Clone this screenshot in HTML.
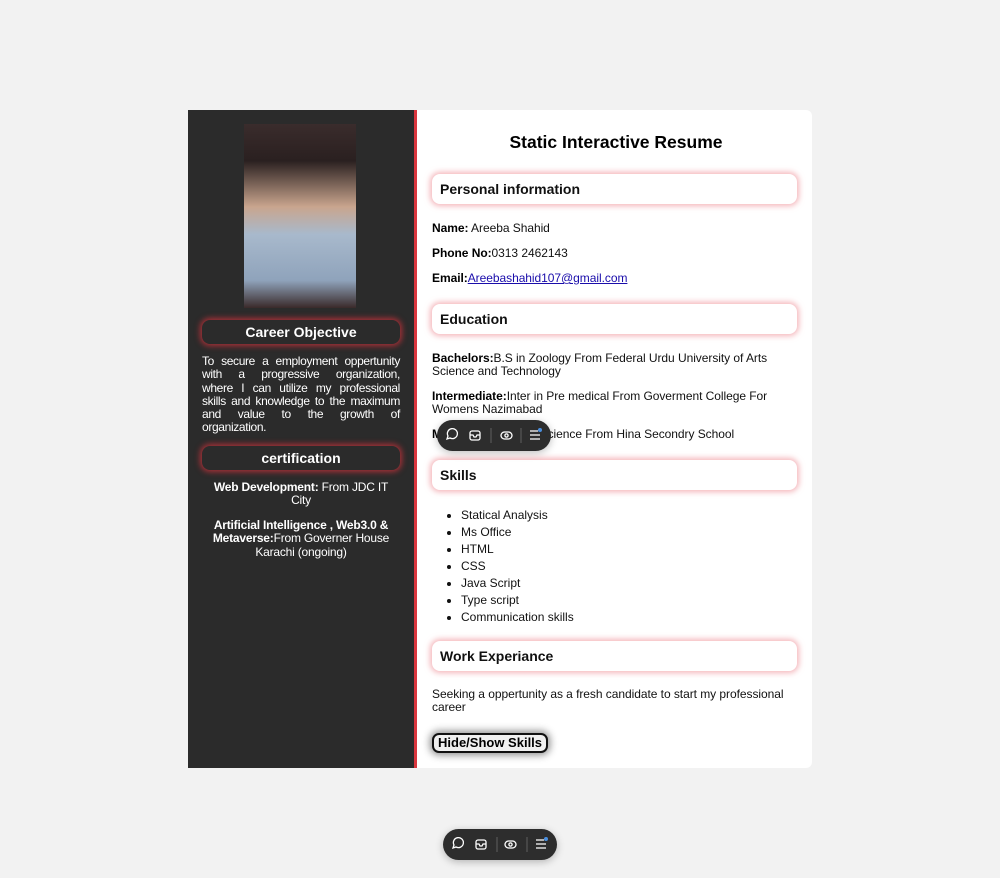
<!DOCTYPE html>
<html><head><meta charset="utf-8"><style>
*{box-sizing:border-box;margin:0;padding:0}
body{width:1000px;height:878px;background:#f2f2f2;font-family:"Liberation Sans",Arial,sans-serif;position:relative;overflow:hidden}
.card{position:absolute;left:188px;top:110px;width:624px;height:658px;background:#fff;border-radius:0 6px 6px 0;overflow:hidden}
.left{position:absolute;left:0;top:0;width:229px;height:658px;background:#2b2b2b;border-right:3px solid #d9363e;color:#fff}
.photo{position:absolute;left:56px;top:14px;width:112px;height:184px;background:linear-gradient(180deg,#3a2c2c 0%,#2a2020 20%,#c9a58e 45%,#a8b9cc 60%,#8fa3bb 85%,#3a2a2a 100%)}
.lh{position:absolute;left:14px;width:198px;height:24px;border-radius:8px;background:#2b2b2b;box-shadow:0 0 6px 2px rgba(220,50,60,.7);text-align:center;font-weight:bold;font-size:14px;line-height:24px}
.lp{position:absolute;left:14px;width:198px;font-size:12px;letter-spacing:-0.35px;line-height:13.3px}
.lp div{text-align:justify;text-align-last:justify;white-space:nowrap;height:13.3px}
.lp div.l{text-align-last:left}
.lc{position:absolute;left:10px;width:206px;font-size:12px;letter-spacing:-0.2px;line-height:13.3px;text-align:center}
.rh{position:absolute;left:244px;width:365px;height:30px;border-radius:8px;background:#fff;box-shadow:0 0 6px 2px rgba(235,120,130,.55);font-weight:bold;font-size:14px;line-height:30px;padding-left:8px;color:#111}
.t{position:absolute;left:244px;font-size:12px;letter-spacing:-0.05px;color:#111;line-height:13px}
.t b{color:#000}
a{color:#1a0dab;text-decoration:underline}
ul{position:absolute;left:273px;top:397px;font-size:12px;line-height:17px;color:#111}
.tb{position:absolute;width:114px;height:31px;border-radius:16px;background:#2d2d2d;box-shadow:0 2px 8px rgba(0,0,0,.25)}
.tb svg{position:absolute;left:0;top:0}
</style></head><body>
<div class="card">
 <div class="left">
  <div class="photo"></div>
  <div class="lh" style="top:210px">Career Objective</div>
  <div class="lp" style="top:245px"><div>To secure a employment oppertunity</div><div>with a progressive organization,</div><div>where I can utilize my professional</div><div>skills and knowledge to the maximum</div><div>and value to the growth of</div><div class="l">organization.</div></div>
  <div class="lh" style="top:336px">certification</div>
  <div class="lc" style="top:371px"><b>Web Development:</b> From JDC IT<br>City</div>
  <div class="lc" style="top:409px"><b>Artificial Intelligence , Web3.0 &amp;<br>Metaverse:</b>From Governer House<br>Karachi (ongoing)</div>
 </div>
 <div style="position:absolute;left:232px;width:392px;top:22px;text-align:center;font-weight:bold;font-size:17.5px">Static Interactive Resume</div>
 <div class="rh" style="top:64px">Personal information</div>
 <div class="t" style="top:112px"><b>Name:</b> Areeba Shahid</div>
 <div class="t" style="top:137px"><b>Phone No:</b>0313 2462143</div>
 <div class="t" style="top:162px"><b>Email:</b><a>Areebashahid107@gmail.com</a></div>
 <div class="rh" style="top:194px">Education</div>
 <div class="t" style="top:242px;width:360px"><b>Bachelors:</b>B.S in Zoology From Federal Urdu University of Arts<br>Science and Technology</div>
 <div class="t" style="top:280px;width:360px"><b>Intermediate:</b>Inter in Pre medical From Goverment College For<br>Womens Nazimabad</div>
 <div class="t" style="top:318px"><b>Matric:</b>Matric in Bio Science From Hina Secondry School</div>
 <div class="rh" style="top:350px">Skills</div>
 <ul><li>Statical Analysis</li><li>Ms Office</li><li>HTML</li><li>CSS</li><li>Java Script</li><li>Type script</li><li>Communication skills</li></ul>
 <div class="rh" style="top:531px">Work Experiance</div>
 <div class="t" style="top:578px;width:370px">Seeking a oppertunity as a fresh candidate to start my professional<br>career</div>
 <div style="position:absolute;left:244px;top:623px;height:20px;padding:0 4px;border:2px solid #111;border-radius:7px;background:#f0f0f0;font-weight:bold;font-size:13px;line-height:16px;box-shadow:0 0 8px 2px rgba(0,0,0,.45)">Hide/Show Skills</div>
</div>
<div class="tb" style="left:437px;top:420px"><svg width="114" height="31" fill="none" stroke="#fff" stroke-width="1.3"><path d="M10 19l1-3a5 5 0 1 1 2 2z"/><rect x="33" y="11" width="10" height="9" rx="2"/><path d="M33 15h3l1 2h2l1-2h3"/><line x1="54" y1="8" x2="54" y2="23" stroke="#555"/><rect x="64" y="12" width="11" height="7" rx="3.5"/><circle cx="69.5" cy="15.5" r="1.6"/><line x1="84" y1="8" x2="84" y2="23" stroke="#555"/><path d="M93 11h8M93 15h10M93 19h10"/><circle cx="103" cy="10" r="2" fill="#4a8fe0" stroke="none"/></svg></div>
<div class="tb" style="left:443px;top:829px"><svg width="114" height="31" fill="none" stroke="#fff" stroke-width="1.3"><path d="M10 19l1-3a5 5 0 1 1 2 2z"/><rect x="33" y="11" width="10" height="9" rx="2"/><path d="M33 15h3l1 2h2l1-2h3"/><line x1="54" y1="8" x2="54" y2="23" stroke="#555"/><rect x="62" y="12" width="11" height="7" rx="3.5"/><circle cx="67.5" cy="15.5" r="1.6"/><line x1="84" y1="8" x2="84" y2="23" stroke="#555"/><path d="M93 11h8M93 15h10M93 19h10"/><circle cx="103" cy="10" r="2" fill="#4a8fe0" stroke="none"/></svg></div>
</body></html>
